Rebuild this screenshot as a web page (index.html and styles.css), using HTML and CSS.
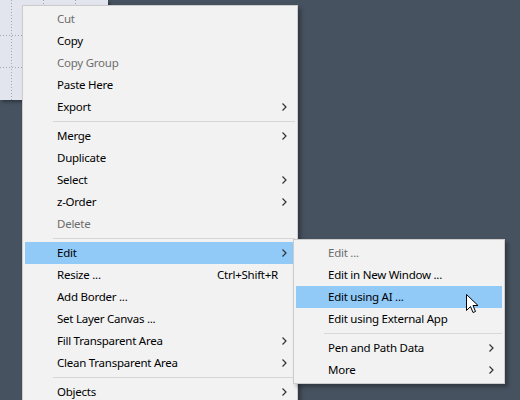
FILE: index.html
```html
<!DOCTYPE html>
<html>
<head>
<meta charset="utf-8">
<link rel="stylesheet" href="styles.css">
</head>
<body>
<div class="stage">
  <div class="canvas"></div>

  <div class="menu main-menu">
    <div class="item disabled"><span class="label">Cut</span></div>
    <div class="item"><span class="label">Copy</span></div>
    <div class="item disabled"><span class="label">Copy Group</span></div>
    <div class="item"><span class="label">Paste Here</span></div>
    <div class="item"><span class="label">Export</span><span class="arrow"><svg width="5" height="8" viewBox="0 0 5 8"><path d="M0.5 0.5 L4 4 L0.5 7.5" fill="none" stroke="#333" stroke-width="1.2"/></svg></span></div>
    <div class="sep"></div>
    <div class="item"><span class="label">Merge</span><span class="arrow"><svg width="5" height="8" viewBox="0 0 5 8"><path d="M0.5 0.5 L4 4 L0.5 7.5" fill="none" stroke="#333" stroke-width="1.2"/></svg></span></div>
    <div class="item"><span class="label">Duplicate</span></div>
    <div class="item"><span class="label">Select</span><span class="arrow"><svg width="5" height="8" viewBox="0 0 5 8"><path d="M0.5 0.5 L4 4 L0.5 7.5" fill="none" stroke="#333" stroke-width="1.2"/></svg></span></div>
    <div class="item"><span class="label">z-Order</span><span class="arrow"><svg width="5" height="8" viewBox="0 0 5 8"><path d="M0.5 0.5 L4 4 L0.5 7.5" fill="none" stroke="#333" stroke-width="1.2"/></svg></span></div>
    <div class="item disabled"><span class="label">Delete</span></div>
    <div class="sep"></div>
    <div class="item active"><span class="label">Edit</span><span class="arrow"><svg width="5" height="8" viewBox="0 0 5 8"><path d="M0.5 0.5 L4 4 L0.5 7.5" fill="none" stroke="#333" stroke-width="1.2"/></svg></span></div>
    <div class="item"><span class="label">Resize ...</span><span class="shortcut">Ctrl+Shift+R</span></div>
    <div class="item"><span class="label">Add Border ...</span></div>
    <div class="item"><span class="label">Set Layer Canvas ...</span></div>
    <div class="item"><span class="label">Fill Transparent Area</span><span class="arrow"><svg width="5" height="8" viewBox="0 0 5 8"><path d="M0.5 0.5 L4 4 L0.5 7.5" fill="none" stroke="#333" stroke-width="1.2"/></svg></span></div>
    <div class="item"><span class="label">Clean Transparent Area</span><span class="arrow"><svg width="5" height="8" viewBox="0 0 5 8"><path d="M0.5 0.5 L4 4 L0.5 7.5" fill="none" stroke="#333" stroke-width="1.2"/></svg></span></div>
    <div class="sep"></div>
    <div class="item"><span class="label">Objects</span><span class="arrow"><svg width="5" height="8" viewBox="0 0 5 8"><path d="M0.5 0.5 L4 4 L0.5 7.5" fill="none" stroke="#333" stroke-width="1.2"/></svg></span></div>
  </div>

  <div class="menu sub-menu">
    <div class="item disabled"><span class="label">Edit ...</span></div>
    <div class="item"><span class="label">Edit in New Window ...</span></div>
    <div class="item active"><span class="label">Edit using AI ...</span></div>
    <div class="item"><span class="label">Edit using External App</span></div>
    <div class="sep"></div>
    <div class="item"><span class="label">Pen and Path Data</span><span class="arrow"><svg width="5" height="8" viewBox="0 0 5 8"><path d="M0.5 0.5 L4 4 L0.5 7.5" fill="none" stroke="#333" stroke-width="1.2"/></svg></span></div>
    <div class="item"><span class="label">More</span><span class="arrow"><svg width="5" height="8" viewBox="0 0 5 8"><path d="M0.5 0.5 L4 4 L0.5 7.5" fill="none" stroke="#333" stroke-width="1.2"/></svg></span></div>
  </div>

  <svg class="cursor" width="13" height="21" viewBox="0 0 13 21">
    <path d="M0.5 0.5 L0.5 16.5 L4.5 12.5 L7 18.5 L9.5 17.5 L7 11.5 L12 11.5 Z" fill="#fff" stroke="#000" stroke-width="1" stroke-linejoin="miter"/>
  </svg>
</div>
</body>
</html>
```

FILE: styles.css
```css
html, body {
  margin: 0;
  padding: 0;
}
body {
  width: 520px;
  height: 400px;
  overflow: hidden;
  background: #46525f;
  font-family: "Segoe UI", "Noto Sans", "DejaVu Sans", sans-serif;
  font-size: 11.5px;
  letter-spacing: -0.25px;
}
.stage {
  position: relative;
  width: 520px;
  height: 400px;
  overflow: hidden;
}
.canvas {
  position: absolute;
  left: 0;
  top: 0;
  width: 108px;
  height: 100px;
  background-color: #e2e5ed;
  background-image:
    repeating-linear-gradient(to bottom, #a3a7ae 0 1px, transparent 1px 3px),
    repeating-linear-gradient(to bottom, #a3a7ae 0 1px, transparent 1px 3px),
    repeating-linear-gradient(to bottom, #a3a7ae 0 1px, transparent 1px 3px),
    repeating-linear-gradient(to right, #a3a7ae 0 1px, transparent 1px 3px),
    repeating-linear-gradient(to right, #a3a7ae 0 1px, transparent 1px 3px);
  background-size: 1px 100%, 1px 100%, 1px 100%, 100% 1px, 100% 1px;
  background-position: 11px 0, 43px 0, 75px 0, 0 35px, 0 67px;
  background-repeat: no-repeat;
  box-shadow: 2px 2px 3px rgba(0,0,0,0.35);
}
.menu {
  position: absolute;
  background: #f2f2f2;
  border: 1px solid #cccccc;
  padding: 2px;
  box-shadow: 3px 3px 4px rgba(0,0,0,0.3);
  color: #000;
}
.main-menu {
  left: 22px;
  top: 5px;
  width: 270px;
}
.sub-menu {
  left: 293px;
  top: 239px;
  width: 206px;
}
.item {
  display: grid;
  grid-template-columns: 32px 1fr auto 17px;
  align-items: center;
  height: 22px;
  white-space: nowrap;
}
.item .label,
.item .shortcut {
  padding-bottom: 1px;
}
.item .label {
  grid-column: 2;
}
.item .shortcut {
  grid-column: 3;
}
.item .arrow {
  grid-column: 4;
  display: flex;
  align-items: center;
  padding-left: 4px;
}
.item .arrow svg {
  display: block;
}
.item.disabled {
  color: #6d6d6d;
}
.item.active {
  background: #91c9f7;
}
.sep {
  height: 7px;
  display: flex;
  align-items: center;
  padding-left: 28px;
}
.sep::after {
  content: "";
  flex: 1;
  height: 1px;
  background: #d7d7d7;
}
.cursor {
  position: absolute;
  left: 466px;
  top: 294px;
}
```
